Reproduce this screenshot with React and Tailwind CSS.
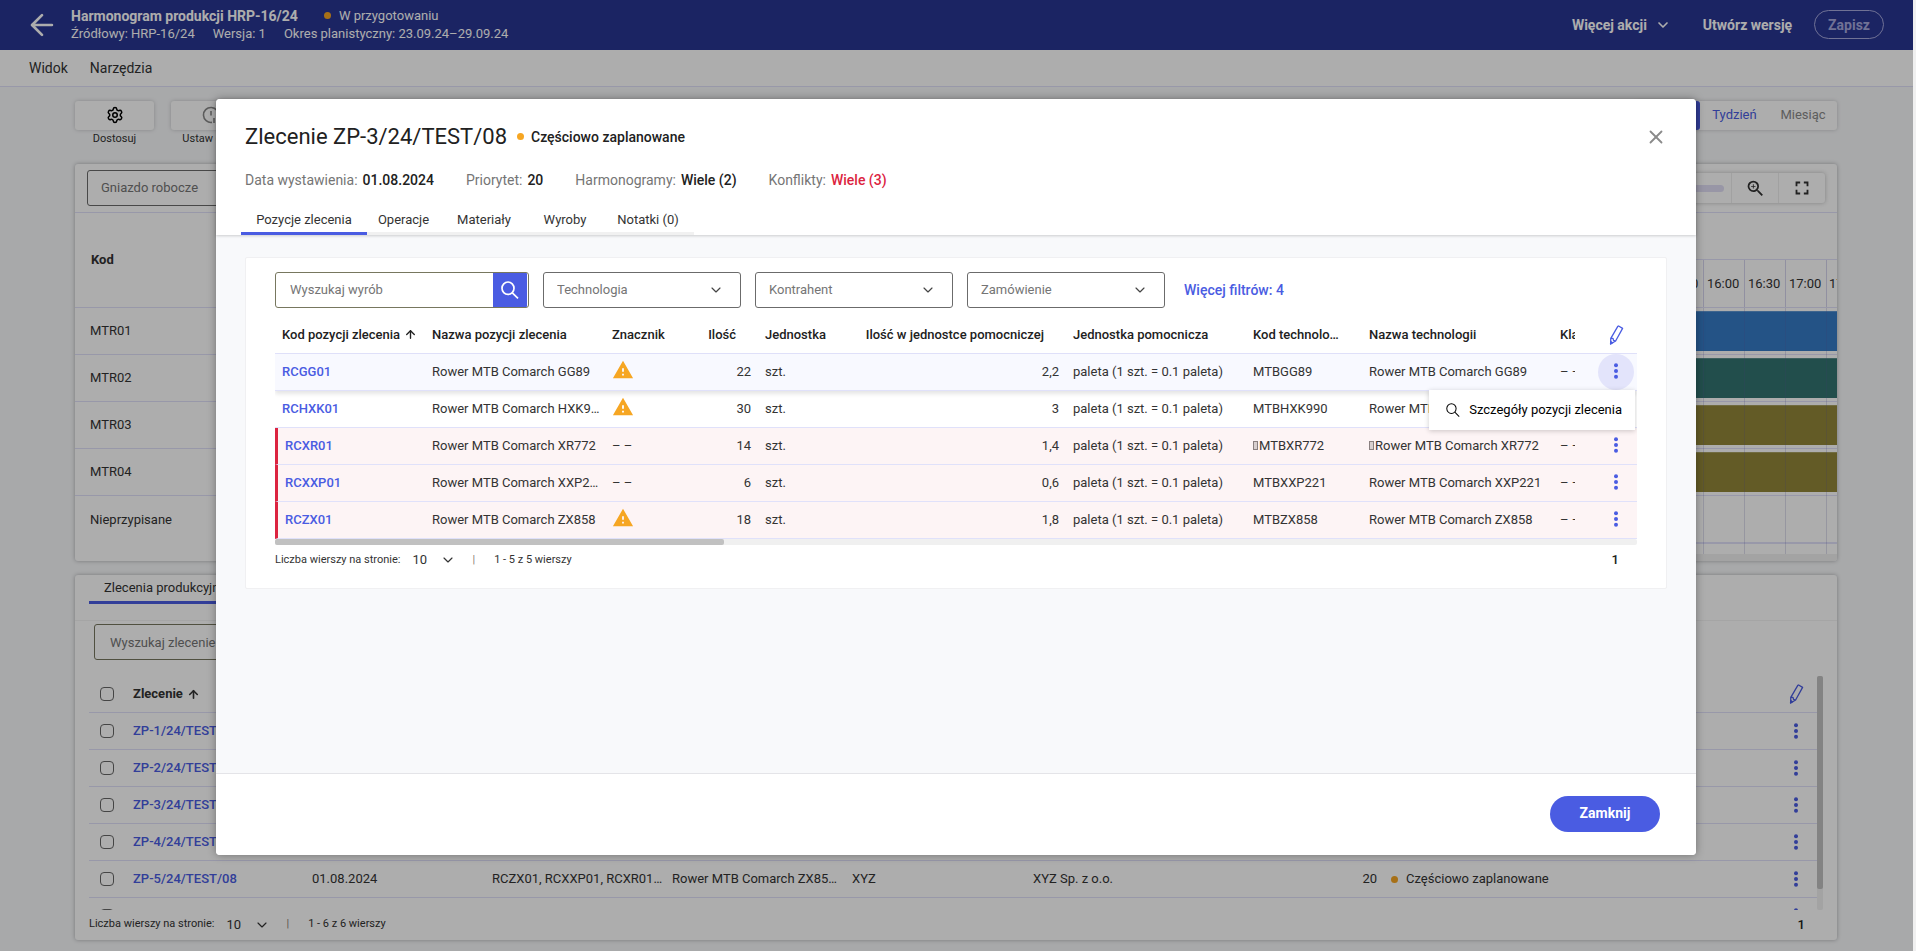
import { ArrowLeft, ArrowUp, ChevronDown, Settings, X } from "lucide-react";
import { MdFullscreen, MdWarning, MdZoomIn } from "react-icons/md";

const machines = [
  { code: "MTR01", bar: "bg-[#367bc6]" },
  { code: "MTR02", bar: "bg-[#337471]" },
  { code: "MTR03", bar: "bg-[#928739]" },
  { code: "MTR04", bar: "bg-[#928739]" },
];

const hours = ["13:00", "13:30", "14:00", "14:30", "15:00", "15:30", "16:00", "16:30", "17:00"];

const orders = [
  { id: "ZP-1/24/TEST/08" },
  { id: "ZP-2/24/TEST/08" },
  { id: "ZP-3/24/TEST/08" },
  { id: "ZP-4/24/TEST/08" },
  {
    id: "ZP-5/24/TEST/08",
    date: "01.08.2024",
    codes: "RCZX01, RCXXP01, RCXR01…",
    name: "Rower MTB Comarch ZX85…",
    client: "XYZ",
    company: "XYZ Sp. z o.o.",
    priority: "20",
    status: "Częściowo zaplanowane",
  },
  { id: "ZP-6/24/TEST/08", name: "Koło rowerowe przód", company: "Król i Syn", status: "Częściowo zaplanowane" },
];

const positions = [
  { code: "RCGG01", name: "Rower MTB Comarch GG89", warn: true, qty: 22, aux: "2,2", tech: "MTBGG89", techName: "Rower MTB Comarch GG89", active: true },
  { code: "RCHXK01", name: "Rower MTB Comarch HXK990", warn: true, qty: 30, aux: "3", tech: "MTBHXK990", techName: "Rower MTB Comarch HXK990" },
  { code: "RCXR01", name: "Rower MTB Comarch XR772", qty: 14, aux: "1,4", tech: "MTBXR772", techName: "Rower MTB Comarch XR772", conflict: true, badChar: true },
  { code: "RCXXP01", name: "Rower MTB Comarch XXP221", qty: 6, aux: "0,6", tech: "MTBXXP221", techName: "Rower MTB Comarch XXP221", conflict: true },
  { code: "RCZX01", name: "Rower MTB Comarch ZX858", warn: true, qty: 18, aux: "1,8", tech: "MTBZX858", techName: "Rower MTB Comarch ZX858", conflict: true },
];

function Dots() {
  return (
    <svg width="4" height="16" viewBox="0 0 4 16" fill="currentColor" aria-hidden="true">
      <circle cx="2" cy="2.3" r="2" />
      <circle cx="2" cy="8" r="2" />
      <circle cx="2" cy="13.7" r="2" />
    </svg>
  );
}

function Pencil() {
  return (
    <svg width="16" height="20" viewBox="0 0 16 20" fill="none" stroke="currentColor" strokeWidth="1.3" strokeLinejoin="round" aria-hidden="true">
      <path d="M10.6 1 L14.6 3.4 L7.6 16 L2.6 19 L2.8 13.4 L9.8 1.4 Z" />
      <path d="M2.8 13.4 L5 13.3 L5.5 15.4 L7.6 16" />
      <path d="M2.6 19 L2.7 16.6 L4.6 17.8 Z" fill="currentColor" />
    </svg>
  );
}

function Magnifier({ size, stroke }) {
  return (
    <svg width={size} height={size} viewBox="0 0 18 18" fill="none" stroke="currentColor" strokeWidth={stroke} aria-hidden="true">
      <ellipse cx="7" cy="7.2" rx="6" ry="6.2" />
      <path d="M11.3 11.8 L17 17.4" />
    </svg>
  );
}

function StatusDot() {
  return <span className="inline-block size-[7px] shrink-0 rounded-full bg-[#f6a623]" />;
}

function Pagination({ range }) {
  return (
    <div className="flex items-center text-[11px] text-[#333]">
      <label className="flex items-center gap-3">
        Liczba wierszy na stronie:
        <span className="relative flex items-center">
          <select className="w-11 appearance-none bg-transparent text-[13px] leading-4" defaultValue="10">
            <option>10</option>
          </select>
          <ChevronDown size={16} strokeWidth={1.75} className="pointer-events-none absolute right-0" />
        </span>
      </label>
      <span className="ml-4 text-[#8a7a70]">|</span>
      <span className="ml-[19px]">{range}</span>
      <a href="#1" aria-current="page" className="ml-auto text-[13px] font-medium text-[#212121]">1</a>
    </div>
  );
}

function FilterSelect({ label }) {
  return (
    <label className="relative flex h-9 w-[198px] items-center">
      <select aria-label={label} defaultValue={label} className="h-full w-full appearance-none rounded-[3px] border border-[#6b6b6b] bg-white px-[13px] text-[13px] text-[#757575]">
        <option>{label}</option>
      </select>
      <ChevronDown size={16} strokeWidth={1.75} className="pointer-events-none absolute right-[17px] text-[#444]" />
    </label>
  );
}

function TopBar() {
  return (
    <header className="flex h-[50px] items-center bg-[#283593] pb-px text-white">
      <button aria-label="Wstecz" className="ml-6 flex size-9 items-center justify-center">
        <ArrowLeft size={34} strokeWidth={1.9} />
      </button>
      <div className="ml-[11px] leading-[18px]">
        <div className="flex items-center">
          <h1 className="text-sm leading-[18px] font-bold">Harmonogram produkcji HRP-16/24</h1>
          <span className="ml-[26px] flex items-center gap-2 text-[13px]">
            <StatusDot />W przygotowaniu
          </span>
        </div>
        <div className="flex gap-[18px] text-[13px] leading-[18px]">
          <span>Źródłowy: HRP-16/24</span>
          <span>Wersja: 1</span>
          <span>Okres planistyczny: 23.09.24–29.09.24</span>
        </div>
      </div>
      <div className="mr-[29px] ml-auto flex items-center text-sm font-bold">
        <button className="flex items-center gap-2">
          Więcej akcji <ChevronDown size={16} strokeWidth={2.5} />
        </button>
        <button className="ml-8">Utwórz wersję</button>
        <button className="ml-[22px] h-[29px] rounded-full border border-[#a5a8dc] px-[13px] text-[#a5a8dc]">Zapisz</button>
      </div>
    </header>
  );
}

function Gantt() {
  return (
    <section className="flex h-[397px] flex-col overflow-hidden rounded-[3px] bg-white shadow-[0_0_4px_rgba(0,0,0,0.3)]">
      <div className="flex h-[49px] shrink-0 items-center justify-between border-b border-[#e0e0fa] px-3">
        <FilterSelect label="Gniazdo robocze" />
        <div className="flex h-[30px] items-center rounded-[3px] shadow-[0_0_4px_rgba(0,0,0,0.25)]">
          <div className="flex h-full w-40 items-center pr-[7px] pl-2">
            <div className="h-[7px] w-full rounded-full bg-[#e0ddf5]" />
          </div>
          <button aria-label="Powiększ" className="flex h-full w-[47px] items-center justify-center border-l border-[#eee] text-[#333]">
            <MdZoomIn size={21} />
          </button>
          <button aria-label="Pełny ekran" className="flex h-full w-[47px] items-center justify-center border-l border-[#eee] text-[#333]">
            <MdFullscreen size={22} />
          </button>
        </div>
      </div>
      <div className="flex flex-1">
        <div className="w-[300px] border-r border-[#e0e0fa] text-[13px] text-[#333]">
          <div className="flex h-[95px] items-center border-b border-[#e0e0fa] pl-4 font-bold">Kod</div>
          {machines.map((m) => (
            <div key={m.code} className="flex h-[47px] items-center border-b border-[#e0e0fa] pl-[15px]">{m.code}</div>
          ))}
          <div className="flex h-[47px] items-center pl-[15px]">Nieprzypisane</div>
        </div>
        <div className="relative flex flex-1 flex-col overflow-hidden">
          <div className="h-[47px] shrink-0 border-b border-[#e0e0fa]" />
          <div className="flex h-12 shrink-0 justify-end border-b border-[#e0e0fa] text-[13px] text-[#333]">
            {hours.map((h) => (
              <span key={h} className="flex w-[41px] shrink-0 items-center border-l border-[#d6d4ee] pl-[3px]">{h}</span>
            ))}
            <span className="flex w-[11px] items-center overflow-hidden border-l border-[#d6d4ee] pl-[2px]">17:30</span>
          </div>
          {machines.map((m) => (
            <div key={m.code} className="h-[47px] shrink-0 border-b border-[#e0e0fa] py-[3px]">
              <div className={`h-10 border-t border-white/20 ${m.bar}`} />
            </div>
          ))}
          <div className="h-[48px] shrink-0 border-b-2 border-[#e0e0fa]" />
          <div className="mt-auto h-[7px] bg-[#f0f0f0]" />
          <div className="absolute inset-x-0 top-[95px] bottom-[7px] flex justify-end">
            {hours.map((h) => (
              <span key={h} className="w-[41px] shrink-0 border-l border-[#5a55a0]/20" />
            ))}
            <span className="w-[11px] border-l border-[#5a55a0]/20" />
          </div>
        </div>
      </div>
    </section>
  );
}

function Checkbox({ label }) {
  return (
    <input type="checkbox" aria-label={label} className="block size-[14px] appearance-none rounded-[4px] border border-[#666] bg-white" />
  );
}

function Orders() {
  const cell = "border-b border-[#e0e0fa] px-[7px] whitespace-nowrap";
  return (
    <section className="mt-[14px] h-[365px] rounded-[3px] bg-white shadow-[0_0_4px_rgba(0,0,0,0.3)]">
      <div className="flex h-[46px] items-start border-b border-[#f4f4f4] px-[14px]">
        <button className="h-[29px] w-[160px] border-b-[3px] border-[#4a5ce2] pl-[15px] text-left text-[13px] text-[#333]">Zlecenia produkcyjne</button>
      </div>
      <div className="px-[14px] pt-[3px]">
        <input aria-label="Wyszukaj zlecenie" placeholder="Wyszukaj zlecenie" className="ml-[5px] h-9 w-[254px] rounded-[3px] border border-[#77775f] px-[15px] text-[13px] placeholder:text-[#757575]" />
        <div className="mt-4 flex h-[234px] overflow-hidden">
          <table className="w-full table-fixed border-separate border-spacing-0 self-start text-[13px] text-[#333]">
            <colgroup>
              <col className="w-[37px]" />
              <col className="w-[179px]" />
              <col className="w-[180px]" />
              <col className="w-[180px]" />
              <col className="w-[180px]" />
              <col className="w-[181px]" />
              <col className="w-[179px]" />
              <col className="w-[179px]" />
              <col />
              <col className="w-[42px]" />
            </colgroup>
            <thead>
              <tr className="h-[37px] text-left">
                <th className="border-b border-[#e0e0fa] pl-[11px]"><Checkbox label="Zaznacz wszystkie" /></th>
                <th className={cell}>
                  <span className="flex items-center gap-1 font-bold">Zlecenie <ArrowUp size={13} strokeWidth={3} /></span>
                </th>
                <th className={cell} /><th className={cell} /><th className={cell} /><th className={cell} />
                <th className={cell} /><th className={cell} /><th className={cell} />
                <th className="border-b border-[#e0e0fa]">
                  <button aria-label="Edytuj kolumny" className="mx-auto flex text-[#4a5ce2]"><Pencil /></button>
                </th>
              </tr>
            </thead>
            <tbody>
              {orders.map((o) => (
                <tr key={o.id} className="h-[37px]">
                  <td className="border-b border-[#e0e0fa] pl-[11px]"><Checkbox label={o.id} /></td>
                  <td className={cell}><a href="#zlecenie" className="font-medium text-[#4a5ce2]">{o.id}</a></td>
                  <td className={cell}>{o.date}</td>
                  <td className={cell}>{o.codes}</td>
                  <td className={cell}>{o.name}</td>
                  <td className={cell}>{o.client}</td>
                  <td className={cell}>{o.company}</td>
                  <td className={`${cell} text-right`}>{o.priority}</td>
                  <td className={cell}>
                    {o.status && <span className="flex items-center gap-2"><StatusDot />{o.status}</span>}
                  </td>
                  <td className="border-b border-[#e0e0fa]">
                    <button aria-label="Akcje" className="mx-auto flex text-[#4a5ce2]"><Dots /></button>
                  </td>
                </tr>
              ))}
            </tbody>
          </table>
          <div className="w-[6px] shrink-0 rounded-[2px] bg-[#f0f0f0]">
            <div className="h-[213px] rounded-[2px] bg-[#c1c1c1]" />
          </div>
        </div>
        <div className="flex h-[29px] flex-col justify-center pr-[18px]">
          <Pagination range="1 - 6 z 6 wierszy" />
        </div>
      </div>
    </section>
  );
}

function BrokenGlyph() {
  return <span className="mr-px inline-block h-[9px] w-[5px] border border-[#8a8080] bg-[#d8cfcf]" />;
}

function Positions() {
  const head = "overflow-hidden border-b border-[#e0e1fa] px-[7px] text-ellipsis whitespace-nowrap font-medium";
  return (
    <div className="overflow-hidden">
      <table className="w-full table-fixed border-separate border-spacing-0 text-[13px] text-[#333]">
        <colgroup>
          <col className="w-[150px]" />
          <col className="w-[180px]" />
          <col className="w-[74px]" />
          <col className="w-[79px]" />
          <col className="w-[97px]" />
          <col />
          <col className="w-[180px]" />
          <col className="w-[116px]" />
          <col className="w-[191px]" />
          <col className="w-[22px]" />
          <col className="w-[62px]" />
        </colgroup>
        <thead>
          <tr className="h-[38px] text-left text-[#212121]">
            <th className={head}>
              <span className="flex items-center gap-1">Kod pozycji zlecenia <ArrowUp size={13} strokeWidth={2.5} /></span>
            </th>
            <th className={head}>Nazwa pozycji zlecenia</th>
            <th className={head}>Znacznik</th>
            <th className={`${head} pr-[22px] text-right`}>Ilość</th>
            <th className={head}>Jednostka</th>
            <th className={`${head} pr-[22px] text-right`}>Ilość w jednostce pomocniczej</th>
            <th className={head}>Jednostka pomocnicza</th>
            <th className={`${head} pr-[22px]`}>Kod technologii</th>
            <th className={head}>Nazwa technologii</th>
            <th className="overflow-hidden border-b border-[#e0e1fa] pl-[7px] font-medium whitespace-nowrap">Klasa</th>
            <th className="border-b border-[#e0e1fa] pl-5">
              <button aria-label="Edytuj kolumny" className="mx-auto flex text-[#4a5ce2]"><Pencil /></button>
            </th>
          </tr>
        </thead>
        <tbody>
          {positions.map((p) => {
            const tone = p.conflict ? "bg-[#fdf4f5]" : p.active ? "bg-[#f8f9ff]" : "";
            const cell = `overflow-hidden border-b border-[#e0e1fa] px-[7px] text-ellipsis whitespace-nowrap ${tone}`;
            return (
              <tr key={p.code} className={p.active ? "relative z-10 h-[37px] shadow-[0_3px_4px_rgba(0,0,0,0.1)]" : "h-[37px]"}>
                <td className={`${cell} ${p.conflict ? "border-l-[3px] border-l-[#dc2340]" : ""}`}>
                  <a href="#pozycja" className="font-medium text-[#4a5ce2]">{p.code}</a>
                </td>
                <td className={`${cell} pr-1`}>{p.name}</td>
                <td className={cell}>
                  {p.warn ? <MdWarning size={22} className="-mt-2 -mb-1 text-[#f6a623]" aria-label="Ostrzeżenie" /> : "– –"}
                </td>
                <td className={`${cell} text-right`}>{p.qty}</td>
                <td className={cell}>szt.</td>
                <td className={`${cell} text-right`}>{p.aux}</td>
                <td className={cell}>paleta (1 szt. = 0.1 paleta)</td>
                <td className={cell}>{p.badChar && <BrokenGlyph />}{p.tech}</td>
                <td className={cell}>{p.badChar && <BrokenGlyph />}{p.techName}</td>
                <td className={`overflow-hidden border-b border-[#e0e1fa] pl-[7px] whitespace-nowrap ${tone}`}>– –</td>
                <td className={`relative border-b border-[#e0e1fa] pl-5 ${tone}`}>
                  <button
                    aria-label="Akcje"
                    className={`mx-auto flex size-9 items-center justify-center rounded-full pb-[2px] text-[#4a5ce2] ${p.active ? "bg-[#e3e4fb]" : ""}`}
                  >
                    <Dots />
                  </button>
                  {p.active && (
                    <div role="menu" className="absolute top-9 right-[2px] z-20 bg-white shadow-[0_1px_5px_rgba(0,0,0,0.2)]">
                      <button role="menuitem" className="flex h-10 items-center gap-[9px] pr-[13px] pl-[17px] text-[13px] whitespace-nowrap text-black">
                        <Magnifier size={14} stroke={1.3} />
                        Szczegóły pozycji zlecenia
                      </button>
                    </div>
                  )}
                </td>
              </tr>
            );
          })}
        </tbody>
      </table>
      <div className="h-[6px] rounded-[2px] bg-[#f0f0f0]">
        <div className="h-full w-[33%] rounded-[2px] bg-[#c1c1c1]" />
      </div>
    </div>
  );
}

function Meta({ label, value, tone = "text-[#212121]" }) {
  return (
    <div className="flex gap-[5px]">
      <dt className="text-[#757575]">{label}</dt>
      <dd className={`font-medium ${tone}`}>{value}</dd>
    </div>
  );
}

function OrderDialog() {
  const tab = "h-[31px] border-b-[3px] border-[#f1f1f1] pt-1";
  return (
    <div role="dialog" aria-label="Zlecenie ZP-3/24/TEST/08" className="flex min-h-[756px] w-full max-w-[1480px] flex-col rounded-[4px] bg-[#f8f9fb] shadow-[0_0_8px_rgba(0,0,0,0.35)]">
      <header className="rounded-t-[4px] bg-white shadow-[0_1px_3px_rgba(0,0,0,0.18)]">
        <div className="flex h-[75px] items-center px-[29px]">
          <h2 className="text-[22px] text-[#212121]">Zlecenie ZP-3/24/TEST/08</h2>
          <span className="ml-[10px] flex items-center gap-[7px] text-sm font-medium text-[#212121]"><StatusDot />Częściowo zaplanowane</span>
          <button aria-label="Zamknij okno" className="ml-auto text-[#8a8a8a]"><X size={22} strokeWidth={2} /></button>
        </div>
        <dl className="flex h-3 items-center gap-8 px-[29px] text-sm">
          <Meta label="Data wystawienia:" value="01.08.2024" />
          <Meta label="Priorytet:" value="20" />
          <Meta label="Harmonogramy:" value="Wiele (2)" />
          <Meta label="Konflikty:" value="Wiele (3)" tone="text-[#dc2340]" />
        </dl>
        <nav className="mt-[18px] flex pl-[25px] text-[13px] text-[#333]">
          <button className="h-[31px] w-[126px] border-b-[3px] border-[#4a5ce2] pt-1">Pozycje zlecenia</button>
          <button className={`${tab} w-[73px]`}>Operacje</button>
          <button className={`${tab} w-[88px]`}>Materiały</button>
          <button className={`${tab} w-[74px]`}>Wyroby</button>
          <button className={`${tab} w-[92px]`}>Notatki (0)</button>
        </nav>
      </header>
      <div className="flex-1 px-[29px] pt-[22px]">
        <div className="rounded-[2px] border border-[#f0f0f2] bg-white px-[29px] pt-[14px]">
          <div className="mb-2 flex items-center gap-[14px]">
            <div className="flex h-9 w-[254px] overflow-hidden rounded-[3px] border border-[#77775f] pr-px">
              <input aria-label="Wyszukaj wyrób" placeholder="Wyszukaj wyrób" className="w-full min-w-0 px-[14px] text-[13px] placeholder:text-[#757575] focus:outline-none" />
              <button aria-label="Szukaj" className="-my-px flex w-[34px] shrink-0 items-center justify-center bg-[#4a5ce2] text-white">
                <Magnifier size={18} stroke={1.7} />
              </button>
            </div>
            <FilterSelect label="Technologia" />
            <FilterSelect label="Kontrahent" />
            <FilterSelect label="Zamówienie" />
            <button className="ml-[5px] text-sm font-medium text-[#4a5ce2]">Więcej filtrów: 4</button>
          </div>
          <Positions />
          <div className="flex h-[43px] flex-col pt-[5px] pr-[18px]">
            <Pagination range="1 - 5 z 5 wierszy" />
          </div>
        </div>
      </div>
      <footer className="flex h-[82px] items-center justify-end rounded-b-[4px] border-t border-[#e4e4e8] bg-white pr-9 pb-[2px]">
        <button className="h-9 w-[110px] rounded-full bg-[#4a5ce2] pb-[2px] text-sm font-bold text-white">Zamknij</button>
      </footer>
    </div>
  );
}

export default function App() {
  return (
    <div className="flex min-h-screen bg-[#f0f0f0] pr-[3px] font-[Roboto,sans-serif]">
      <div className="relative min-w-0 flex-1 bg-[#f8f9fb]">
        <TopBar />
        <nav className="flex h-[37px] items-center gap-[22px] border-b border-[#e0e0fa] bg-white px-[29px] text-sm text-[#333]">
          <button>Widok</button>
          <button>Narzędzia</button>
        </nav>
        <main className="px-[76px] pt-[14px] pb-[11px] pl-[75px]">
          <div className="flex h-[63px] items-start justify-between">
            <div className="flex gap-[17px] text-[11px] text-[#333]">
              <button className="flex w-[79px] flex-col items-center gap-px">
                <span className="flex h-[29px] w-full items-center justify-center rounded-[3px] bg-white pb-[2px] text-black shadow-[0_0_4px_rgba(0,0,0,0.2)]"><Settings size={18} strokeWidth={2} /></span>
                Dostosuj
              </button>
              <button className="flex w-[79px] flex-col items-center gap-px">
                <span className="flex h-[29px] w-full items-center justify-center rounded-[3px] bg-white pb-[2px] text-[#888] shadow-[0_0_4px_rgba(0,0,0,0.2)]">
                  <svg width="18" height="18" viewBox="0 0 18 18" fill="none" stroke="currentColor" strokeWidth="1.6" aria-hidden="true">
                    <path d="M10 16.4 A7.5 7.5 0 1 1 16.4 10 M9 5 V9.5 M12 12 V17 M15 12 V17" />
                  </svg>
                </span>
                Ustaw czas
              </button>
            </div>
            <div className="flex h-[29px] overflow-hidden rounded-[3px] bg-white text-[13px] shadow-[0_0_4px_rgba(0,0,0,0.2)]">
              <button className="w-16 rounded-[3px] bg-[#4a5ce2] pb-[2px] text-white">Dzień</button>
              <button className="w-[69px] pb-[2px] text-[#4a5ce2]">Tydzień</button>
              <button className="w-[68px] pb-[2px] text-[#8a8a8a]">Miesiąc</button>
            </div>
          </div>
          <Gantt />
          <Orders />
        </main>
        <div className="absolute inset-0 flex items-center justify-center bg-black/32 pt-[3px] pr-px">
          <OrderDialog />
        </div>
      </div>
    </div>
  );
}
